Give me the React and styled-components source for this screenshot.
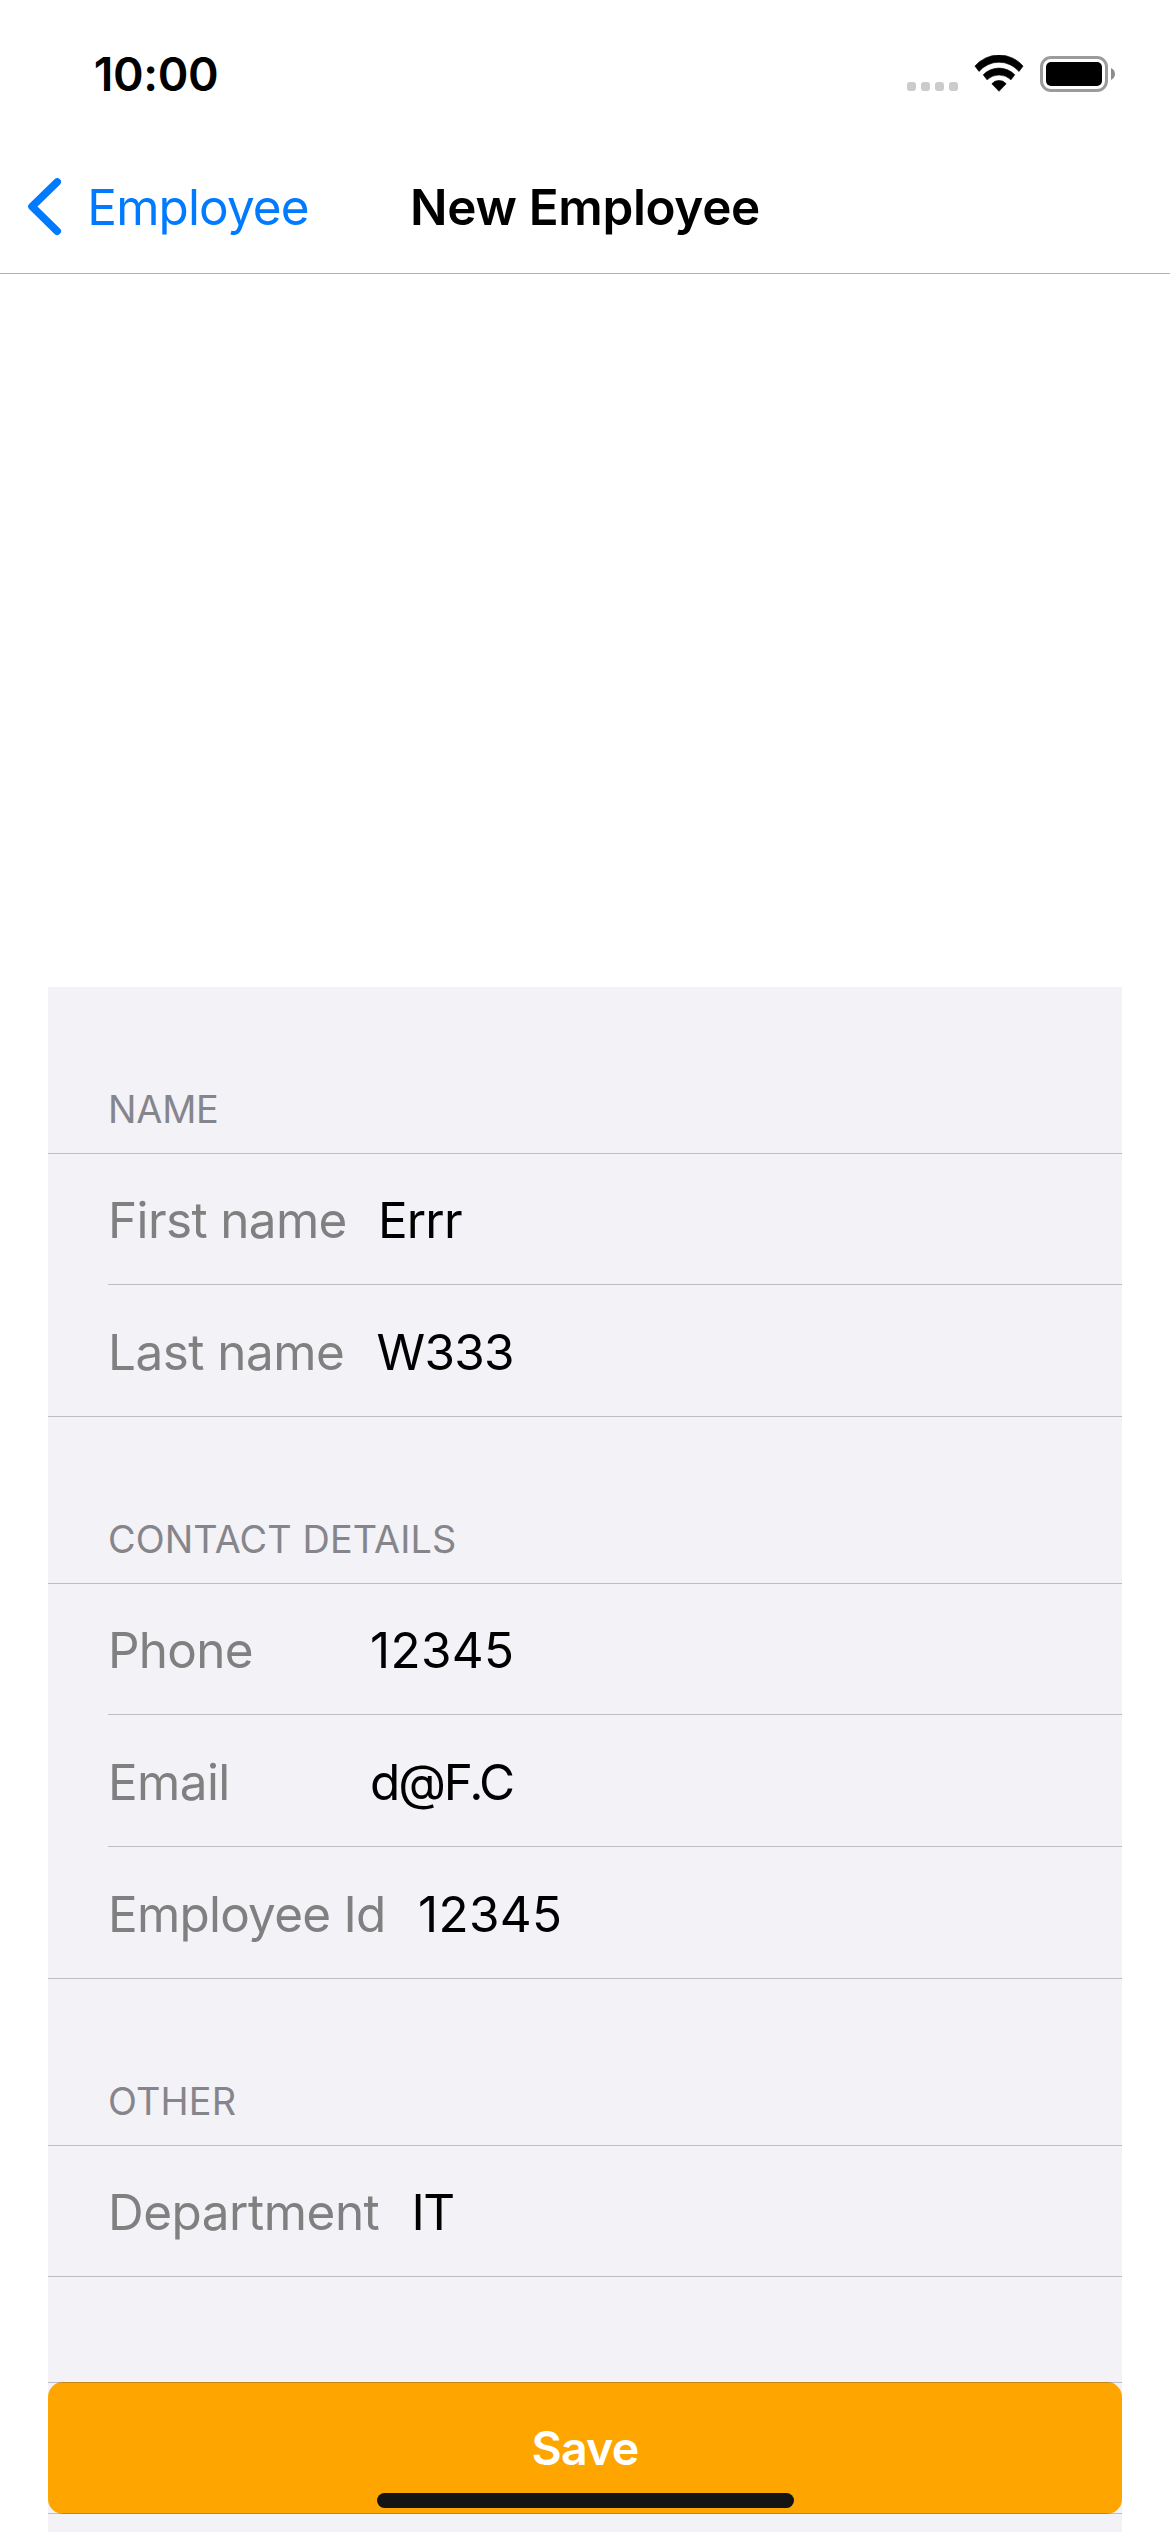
import React from "react";
import styled, { createGlobalStyle } from "styled-components";

const GlobalStyle = createGlobalStyle`
  * { box-sizing: border-box; }
  body { margin: 0; background: #fff; }
`;

const separator = "rgba(60, 60, 67, 0.29)";

const Screen = styled.div`
  position: relative;
  width: 1170px;
  height: 2532px;
  overflow: hidden;
  display: flex;
  flex-direction: column;
  background: #fff;
  color: #000;
  font-family: Inter, Roboto, sans-serif;
`;

const StatusBar = styled.header`
  flex: none;
  height: 141px;
  padding: 7px 55px 0 93.7px;
  display: flex;
  align-items: center;
  justify-content: space-between;
`;

const Time = styled.time`
  font-size: 46.5px;
  font-weight: 600;
  line-height: 56px;
  letter-spacing: -0.38px;
`;

const StatusIcons = styled.div`
  display: flex;
  align-items: flex-end;
  height: 37px;
  margin-bottom: 1px;
  svg { display: block; }
`;

const SignalDots = styled.div`
  display: flex;
  gap: 5px;
  margin: 0 16px 1px 0;
`;

const SignalDot = styled.span`
  width: 9px;
  height: 9px;
  border-radius: 3px;
  background: #cbcbcb;
`;

const NavBar = styled.nav`
  flex: none;
  height: 133px;
  border-bottom: 1px solid #b2b2b2;
  display: grid;
  grid-template-columns: 1fr auto 1fr;
  align-items: center;
  font-size: 49.4px;
  line-height: 60px;
`;

const BackButton = styled.button`
  border: 0;
  padding: 0 0 0 26px;
  background: none;
  color: #007aff;
  font: inherit;
  letter-spacing: -0.84px;
  display: flex;
  align-items: center;
  gap: 21.3px;
  svg { display: block; }
`;

const Title = styled.h1`
  margin: 0;
  font-size: inherit;
  font-weight: 600;
  letter-spacing: -0.32px;
`;

const Form = styled.form`
  flex: 1;
  margin: 713px 48px 0;
  background: #f2f2f7;
`;

const SectionTitle = styled.h2`
  margin: 0;
  height: 167px;
  padding: 0 60px 20px;
  border-bottom: 1px solid ${separator};
  display: flex;
  align-items: flex-end;
  font-size: 37.8px;
  font-weight: 400;
  line-height: 48px;
  letter-spacing: ${(p) => p.$tracking}px;
  color: #86858b;
`;

const Rows = styled.div`
  border-bottom: 1px solid ${separator};
`;

const Row = styled.label`
  height: 132px;
  margin-left: 60px;
  padding-top: 3px;
  display: flex;
  align-items: center;
  font-size: 49.4px;
  line-height: 60px;
  white-space: nowrap;
  border-bottom: 1px solid ${separator};
  &:first-child { height: 131px; padding-top: 1px; }
  &:last-child { height: 131px; border-bottom: 0; }
  &:only-child { height: 130px; }
`;

const FieldName = styled.span`
  width: ${(p) => p.$width}px;
  letter-spacing: ${(p) => p.$tracking}px;
  color: #808080;
`;

const FieldValue = styled.span`
  letter-spacing: ${(p) => p.$tracking}px;
`;

const SaveRow = styled.div`
  position: relative;
  height: 132px;
  margin-top: 105px;
  &::after {
    content: "";
    position: absolute;
    inset: 0;
    border: solid ${separator};
    border-width: 1px 0;
  }
`;

const SaveButton = styled.button`
  width: 100%;
  height: 132px;
  border: 0;
  border-radius: 15px;
  padding: 0;
  background: #ffa500;
  color: #fff;
  font: 600 46.5px/56px Inter, Roboto, sans-serif;
  letter-spacing: -0.75px;
`;

const HomeIndicator = styled.div`
  position: absolute;
  left: 377px;
  bottom: 24px;
  width: 417px;
  height: 15px;
  border-radius: 8px;
  background: #141414;
`;

const sections = [
  {
    title: "NAME",
    tracking: -0.2,
    rows: [
      { name: "First name", width: 270, nt: -0.6, value: "Errr", vt: -0.84 },
      { name: "Last name", width: 268.5, nt: -0.5, value: "W333", vt: -0.69 },
    ],
  },
  {
    title: "CONTACT DETAILS",
    tracking: 0.12,
    rows: [
      { name: "Phone", width: 262, nt: -0.7, value: "12345", vt: 0.34 },
      { name: "Email", width: 262, nt: -0.6, value: "d@F.C", vt: -2.1 },
      { name: "Employee Id", width: 310, nt: -0.74, value: "12345", vt: 0.34 },
    ],
  },
  {
    title: "OTHER",
    tracking: 0.2,
    rows: [{ name: "Department", width: 303.5, nt: -0.45, value: "IT", vt: -1.5 }],
  },
];

function WifiIcon() {
  return (
    <svg width="50" height="37" viewBox="0 0 50 37" stroke="#000" strokeWidth="0.6" strokeLinejoin="round">
      <path d="M.9 11.1A31.7 31.7 0 0 1 49.1 11.1L45 16.5A26.2 26.2 0 0 0 5 16.5Z" />
      <path d="M9.2 19.8A22 22 0 0 1 40.8 19.8L37 24.8A17.4 17.4 0 0 0 13 24.8Z" />
      <path d="M17.8 28.8A9.3 9.3 0 0 1 32.2 28.8L25 36.3Z" />
    </svg>
  );
}

function BatteryIcon() {
  return (
    <svg width="75" height="37" viewBox="0 0 75 37">
      <rect x="1.5" y="2.5" width="65" height="33" rx="9.5" fill="none" stroke="#9b9b9b" strokeWidth="3" />
      <rect x="6" y="7" width="56" height="24" rx="5" />
      <path d="M71 13C76.3 15.5 76.3 22.5 71 25Z" fill="#8c8c8c" />
    </svg>
  );
}

export default function App() {
  return (
    <Screen>
      <GlobalStyle />
      <StatusBar>
        <Time>10:00</Time>
        <StatusIcons>
          <SignalDots>
            {[0, 1, 2, 3].map((i) => (
              <SignalDot key={i} />
            ))}
          </SignalDots>
          <WifiIcon />
          <svg width="16" height="1" />
          <BatteryIcon />
        </StatusIcons>
      </StatusBar>
      <NavBar>
        <BackButton type="button">
          <svg width="40" height="64" viewBox="0 0 40 64" fill="none" stroke="currentColor" strokeWidth="7.6" strokeLinecap="round" strokeLinejoin="round">
            <path d="M31.2 7L6 31.5L31.2 56.2" />
          </svg>
          Employee
        </BackButton>
        <Title>New Employee</Title>
      </NavBar>
      <Form>
        {sections.map((s) => (
          <section key={s.title}>
            <SectionTitle $tracking={s.tracking}>{s.title}</SectionTitle>
            <Rows>
              {s.rows.map((r) => (
                <Row key={r.name}>
                  <FieldName $width={r.width} $tracking={r.nt}>{r.name}</FieldName>
                  <FieldValue $tracking={r.vt}>{r.value}</FieldValue>
                </Row>
              ))}
            </Rows>
          </section>
        ))}
        <SaveRow>
          <SaveButton type="button">Save</SaveButton>
        </SaveRow>
      </Form>
      <HomeIndicator />
    </Screen>
  );
}
